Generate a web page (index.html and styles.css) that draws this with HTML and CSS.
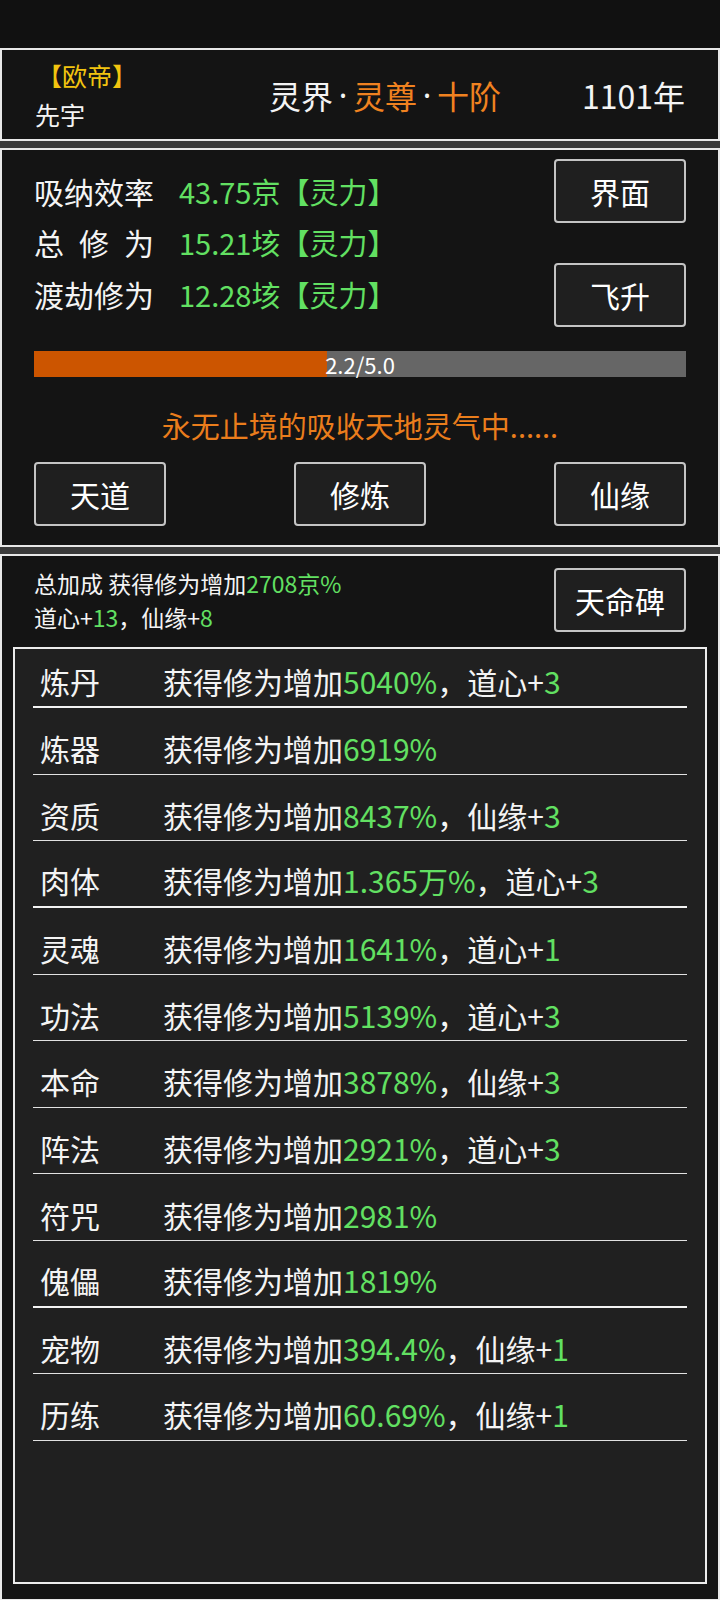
FILE: index.html
```html
<!DOCTYPE html>
<html lang="zh-CN">
<head>
<meta charset="utf-8">
<title>修仙</title>
<link rel="stylesheet" href="styles.css">
</head>
<body>
<div class="topbar"></div>
<header class="panel header">
  <div class="who">
    <div class="title">【欧帝】</div>
    <div class="name">先宇</div>
  </div>
  <div class="realm"><span>灵界</span><span class="dot">·</span><span class="hl">灵尊</span><span class="dot">·</span><span class="hl">十阶</span></div>
  <div class="year">1101年</div>
</header>
<div class="sep"></div>
<section class="panel cultivate">
  <div class="stats-row">
    <div class="stats">
      <div class="stat"><span class="label">吸纳效率</span><span class="val">43.75京【灵力】</span></div>
      <div class="stat"><span class="label spread">总修为</span><span class="val">15.21垓【灵力】</span></div>
      <div class="stat"><span class="label">渡劫修为</span><span class="val">12.28垓【灵力】</span></div>
    </div>
    <div class="side-btns">
      <button class="btn">界面</button>
      <button class="btn">飞升</button>
    </div>
  </div>
  <div class="bar">
    <div class="fill" style="width:45%"></div>
    <div class="bar-text">2.2/5.0</div>
  </div>
  <p class="status">永无止境的吸收天地灵气中......</p>
  <div class="actions">
    <button class="btn">天道</button>
    <button class="btn">修炼</button>
    <button class="btn">仙缘</button>
  </div>
</section>
<div class="sep"></div>
<section class="panel bonus">
  <div class="bonus-head">
    <div class="summary">
      <p>总加成 获得修为增加<em>2708京%</em></p>
      <p>道心+<em>13</em>，仙缘+<em>8</em></p>
    </div>
    <button class="btn">天命碑</button>
  </div>
  <div class="list">
    <div class="row b2"><span class="cat">炼丹</span><span class="desc">获得修为增加<em>5040%</em>，道心+<em>3</em></span></div>
    <div class="row"><span class="cat">炼器</span><span class="desc">获得修为增加<em>6919%</em></span></div>
    <div class="row"><span class="cat">资质</span><span class="desc">获得修为增加<em>8437%</em>，仙缘+<em>3</em></span></div>
    <div class="row b2"><span class="cat">肉体</span><span class="desc">获得修为增加<em>1.365万%</em>，道心+<em>3</em></span></div>
    <div class="row"><span class="cat">灵魂</span><span class="desc">获得修为增加<em>1641%</em>，道心+<em>1</em></span></div>
    <div class="row"><span class="cat">功法</span><span class="desc">获得修为增加<em>5139%</em>，道心+<em>3</em></span></div>
    <div class="row"><span class="cat">本命</span><span class="desc">获得修为增加<em>3878%</em>，仙缘+<em>3</em></span></div>
    <div class="row"><span class="cat">阵法</span><span class="desc">获得修为增加<em>2921%</em>，道心+<em>3</em></span></div>
    <div class="row"><span class="cat">符咒</span><span class="desc">获得修为增加<em>2981%</em></span></div>
    <div class="row b2"><span class="cat">傀儡</span><span class="desc">获得修为增加<em>1819%</em></span></div>
    <div class="row"><span class="cat">宠物</span><span class="desc">获得修为增加<em>394.4%</em>，仙缘+<em>1</em></span></div>
    <div class="row"><span class="cat">历练</span><span class="desc">获得修为增加<em>60.69%</em>，仙缘+<em>1</em></span></div>
  </div>
</section>
</body>
</html>
```
FILE: styles.css
```css
* {
  box-sizing: border-box;
  margin: 0;
  padding: 0;
}

body {
  margin: 0;
  width: 720px;
  background: #111111;
  color: #f4f4f4;
  font-family: "Noto Sans CJK SC", "Noto Sans", sans-serif;
}

em {
  font-style: normal;
  color: #62e062;
}

.topbar {
  height: 48px;
  background: #111111;
}

.panel {
  background: #141414;
  border: 2px solid #e8e8e8;
}

.sep {
  height: 7px;
  background: #3a3a3a;
}

/* header */
.header {
  height: 93px;
  display: flex;
  align-items: center;
  padding: 0 33px;
}

.who {
  width: 234px;
  font-size: 25px;
  line-height: 39px;
}

.title {
  color: #f2c40f;
  margin-left: 2px;
}

.realm {
  display: flex;
  font-size: 32px;
  line-height: 40px;
}

.dot {
  width: 20px;
  text-align: center;
  font-family: "Noto Sans", "DejaVu Sans", sans-serif;
}

.hl {
  color: #f08220;
}

.year {
  margin-left: auto;
  font-size: 32px;
  line-height: 40px;
}

/* buttons */
.btn {
  width: 132px;
  height: 64px;
  background: #1f1f1f;
  border: 2px solid #c4c4c4;
  border-radius: 4px;
  color: #ffffff;
  font-family: inherit;
  font-size: 30px;
  line-height: 1;
  cursor: pointer;
}

/* cultivation panel */
.cultivate {
  padding: 9px 0 19px;
}

.stats-row {
  display: flex;
  align-items: center;
  justify-content: space-between;
  padding: 0 32px;
}

.stat {
  display: flex;
  align-items: baseline;
  font-size: 30px;
  line-height: 51.5px;
}

.label {
  width: 120px;
  margin-right: 25px;
}

.label.spread {
  text-align: justify;
  text-align-last: justify;
}

.val {
  color: #62e062;
  font-size: 29px;
}

.side-btns {
  display: flex;
  flex-direction: column;
  gap: 40px;
}

.bar {
  margin: 24px 32px 0;
  height: 26px;
  background: #666666;
  display: grid;
}

.fill,
.bar-text {
  grid-area: 1 / 1;
}

.fill {
  background: #cc5500;
  justify-self: start;
}

.bar-text {
  text-align: center;
  font-size: 22px;
  line-height: 26px;
  color: #ffffff;
}

.status {
  margin-top: 28px;
  text-align: center;
  color: #ea7d1c;
  font-size: 29px;
  line-height: 40px;
}

.actions {
  margin-top: 17px;
  display: flex;
  justify-content: space-between;
  padding: 0 32px;
}

/* bonus panel */
.bonus {
  padding: 12px 0 15px;
}

.bonus-head {
  height: 64px;
  display: flex;
  align-items: center;
  justify-content: space-between;
  padding: 0 32px;
}

.summary {
  font-size: 23px;
  line-height: 34px;
}

.list {
  margin: 15px 11px 0;
  height: 937px;
  border: 2px solid #ececec;
  background: #202020;
  padding: 0 18px;
}

.row {
  height: 66.64px;
  display: flex;
  align-items: flex-end;
  padding: 0 0 7.5px 7px;
  border-bottom: 1px solid #e2e2e2;
  font-size: 30px;
  line-height: 36px;
}

.row:first-child {
  height: 59px;
}

.row.b2 {
  border-bottom: 2px solid #f2f2f2;
}

.cat {
  width: 123px;
  flex: none;
}
```
